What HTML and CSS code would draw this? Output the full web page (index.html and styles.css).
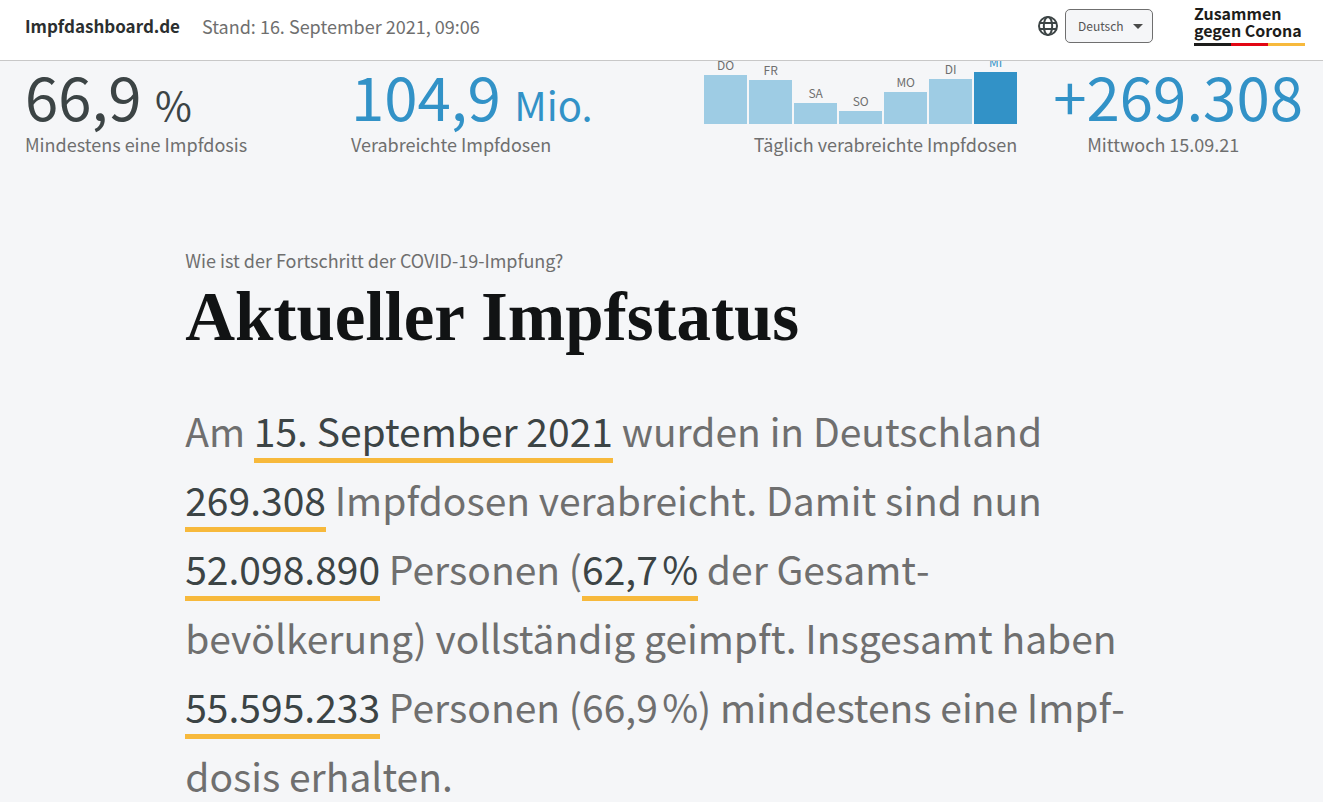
FILE: index.html
```html
<!DOCTYPE html>
<html lang="de">

<head>
    <meta charset="UTF-8">
    <meta name="viewport" content="width=device-width, initial-scale=1.0">
    <title>Impfdashboard.de</title>

    <link rel="stylesheet" href="styles.css">
</head>

<body>
    <header class="header">
        <a class="brand" href="#">Impfdashboard.de</a>
        <span class="date">Stand: 16. September 2021, 09:06</span>
        <div class="language">
            <svg class="globe" viewBox="0 0 20 20" aria-hidden="true">
                <circle cx="10" cy="10" r="9" />
                <ellipse cx="10" cy="10" rx="4.2" ry="9" />
                <path d="M1.8 7h16.4M1.8 13h16.4" />
            </svg>
            <div class="select">
                <select aria-label="Sprache">
                    <option>Deutsch</option>
                    <option>English</option>
                </select>
            </div>
        </div>
        <a class="logo" href="#">
            <span>Zusammen</span>
            <span>gegen Corona</span>
            <svg class="flag" viewBox="0 0 111 3" preserveAspectRatio="none" aria-hidden="true">
                <rect width="37" height="3" fill="#1d1d1b" />
                <rect x="37" width="37" height="3" fill="#e20613" />
                <rect x="74" width="37" height="3" fill="#f7b93c" />
            </svg>
        </a>
    </header>

    <section class="stats">
        <div class="totals">
            <div class="stat">
                <div class="number">66,9 <small>%</small></div>
                <div class="label">Mindestens eine Impfdosis</div>
            </div>
            <div class="stat blue">
                <div class="number">104,9 <small>Mio.</small></div>
                <div class="label">Verabreichte Impfdosen</div>
            </div>
        </div>
        <div class="daily">
            <div class="stat chart">
                <div class="bars">
                    <div class="day">DO<div class="bar" style="height: 49px"></div></div>
                    <div class="day">FR<div class="bar" style="height: 44px"></div></div>
                    <div class="day">SA<div class="bar" style="height: 21px"></div></div>
                    <div class="day">SO<div class="bar" style="height: 13px"></div></div>
                    <div class="day">MO<div class="bar" style="height: 32px"></div></div>
                    <div class="day">DI<div class="bar" style="height: 45px"></div></div>
                    <div class="day active">MI<div class="bar" style="height: 52px"></div></div>
                </div>
                <div class="label">Täglich verabreichte Impfdosen</div>
            </div>
            <div class="stat blue">
                <div class="number">+269.308</div>
                <div class="label latest">Mittwoch 15.09.21</div>
            </div>
        </div>
    </section>

    <main>
        <p class="topline">Wie ist der Fortschritt der COVID-19-Impfung?</p>
        <h1>Aktueller Impfstatus</h1>
        <p class="intro">Am <mark>15. September 2021</mark> wurden in Deutschland <mark>269.308</mark> Impfdosen verabreicht. Damit sind nun <mark>52.098.890</mark> Personen (<mark>62,7&#8239;%</mark> der Gesamt&shy;bevölkerung) vollständig geimpft. Insgesamt haben <mark>55.595.233</mark> Personen (66,9&#8239;%) mindestens eine Impf&shy;dosis erhalten.</p>
    </main>
</body>

</html>
```

FILE: styles.css
```css
* {
    box-sizing: border-box;
    margin: 0;
    padding: 0;
}

body {
    font-family: "Noto Sans CJK SC", "Open Sans", sans-serif;
    font-size: 18px;
    line-height: 24px;
    color: #6f6f6f;
    background-color: #f5f6f8;
}

a {
    color: inherit;
    text-decoration: none;
}

/* header stays on top of the stats */
.header {
    position: fixed;
    top: 0;
    left: 0;
    right: 0;
    z-index: 1;
    display: flex;
    align-items: center;
    height: 61px;
    padding: 0 18px 9px 25px;
    background-color: #fff;
    border-bottom: 1px solid #c8c8c8;
}

.brand {
    color: #2b2f30;
    font-size: 17px;
    font-weight: bold;
}

.date {
    margin-left: 22px;
}

.language {
    display: flex;
    align-items: center;
    gap: 7px;
    margin-left: auto;
}

.globe {
    width: 20px;
    height: 20px;
    fill: none;
    stroke: #3c4445;
    stroke-width: 2;
}

.select {
    position: relative;
}

.select::after {
    content: "";
    position: absolute;
    top: 15px;
    right: 10px;
    border: 5px solid transparent;
    border-top-color: #4a4a4a;
    border-bottom: 0;
    pointer-events: none;
}

select {
    display: block;
    appearance: none;
    width: 88px;
    height: 34px;
    padding: 0 12px;
    font-family: inherit;
    font-size: 12px;
    color: #555;
    background-color: #f5f6f8;
    border: 1px solid #6f6f6f;
    border-radius: 5px;
}

.logo {
    display: flex;
    flex-direction: column;
    margin-left: 41px;
    color: #1d1d1b;
    font-size: 16px;
    font-weight: bold;
    line-height: 17px;
}

.flag {
    width: 100%;
    height: 3px;
    margin-top: 4px;
}

.stats {
    display: grid;
    grid-template-columns: 51% 49%;
    padding: 64px 20px 0 25px;
}

.totals {
    display: grid;
    grid-template-columns: 1fr 1fr;
}

.daily {
    display: flex;
    justify-content: flex-end;
    gap: 36px;
}

.number {
    height: 68px;
    font-size: 60px;
    line-height: 62px;
    color: #3c4445;
    white-space: nowrap;
}

.number small {
    font-size: 40px;
}

.blue .number {
    color: #3292c7;
}

.chart {
    text-align: right;
}

.bars {
    display: flex;
    align-items: flex-end;
    gap: 2px;
    height: 60px;
    margin-bottom: 8px;
}

.day {
    width: 43px;
    font-size: 12px;
    line-height: 20px;
    text-align: center;
}

.bar {
    background-color: #9ecce4;
}

.active {
    color: #3292c7;
}

.active .bar {
    background-color: #3292c7;
}

.latest {
    padding-left: 34px;
}

main {
    padding: 92px 13% 0 14%;
}

h1 {
    font-family: "Liberation Serif", serif;
    font-size: 69px;
    line-height: 90px;
    color: #111314;
}

.intro {
    margin-top: 34px;
    font-size: 39px;
    line-height: 69px;
    hyphenate-character: "-";
}

mark {
    color: #3c4445;
    background: none;
    border-bottom: 5px solid #f7b93c;
}
```
